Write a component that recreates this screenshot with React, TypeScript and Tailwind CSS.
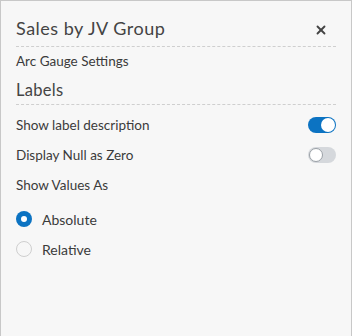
import { X } from 'lucide-react';

function Toggle({ on }: { on: boolean }) {
  return (
    <div
      className={`relative h-4 w-7 rounded-full ${on ? 'bg-[#0c73c2]' : 'bg-[#d5d8dc]'}`}
    >
      <div
        className={`absolute top-[1px] h-[14px] w-[14px] rounded-full bg-white ${
          on ? 'right-[1px]' : 'left-[1px] border border-[#9aa0a6]'
        }`}
      />
    </div>
  );
}

function Radio({ checked, label }: { checked: boolean; label: string }) {
  return (
    <div className="flex h-[30px] items-center">
      {checked ? (
        <div className="flex h-4 w-4 items-center justify-center rounded-full bg-[#0c73c2]">
          <div className="h-[6px] w-[6px] rounded-full bg-white" />
        </div>
      ) : (
        <div className="h-4 w-4 rounded-full border border-[#cfcfcf] bg-[#f7f7f7]" />
      )}
      <span className="ml-[10px] text-[14px] text-[#3b3b3b]">{label}</span>
    </div>
  );
}

export default function App() {
  return (
    <div
      className="h-[336px] w-[352px] border-x border-t border-[#c8c8c8] bg-[#f7f7f7] px-[15px]"
      style={{ fontFamily: 'Lato, "Noto Sans", sans-serif' }}
    >
      <div className="flex h-[46px] items-end justify-between border-b border-dashed border-[#cfcfcf] pb-[4px]">
        <h2 className="text-[18px] tracking-[0.5px] text-[#444]">Sales by JV Group</h2>
        <X className="mb-[5px] mr-[8px] h-[14px] w-[14px] text-[#444]" strokeWidth={3.2} />
      </div>
      <div className="flex h-[29px] items-center text-[13.5px] text-[#3b3b3b]">Arc Gauge Settings</div>
      <div className="flex h-[29px] items-center border-b border-dashed border-[#cfcfcf] text-[16.5px] tracking-[0.3px] text-[#444]">
        Labels
      </div>
      <div className="mt-[5px] flex h-[30px] items-center justify-between">
        <span className="text-[13.5px] text-[#3b3b3b]">Show label description</span>
        <Toggle on />
      </div>
      <div className="flex h-[30px] items-center justify-between">
        <span className="text-[13.5px] text-[#3b3b3b]">Display Null as Zero</span>
        <Toggle on={false} />
      </div>
      <div className="flex h-[30px] items-center text-[13.5px] text-[#3b3b3b]">Show Values As</div>
      <div className="mt-[4px]">
        <Radio checked label="Absolute" />
        <Radio checked={false} label="Relative" />
      </div>
    </div>
  );
}
